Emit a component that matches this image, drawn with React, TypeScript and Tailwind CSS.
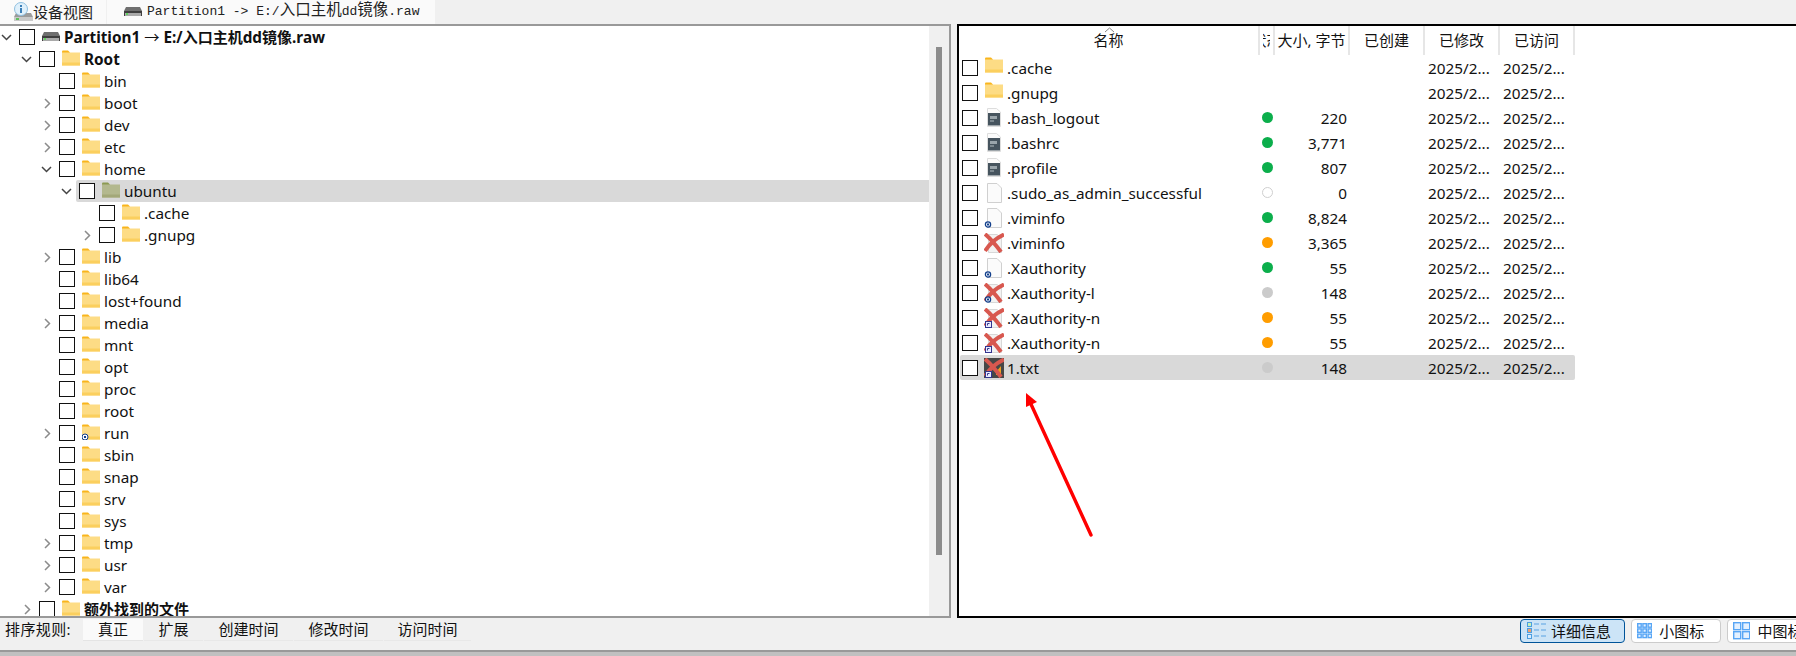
import React from "react";

const sans = "font-['Noto_Sans','Noto_Sans_CJK_SC',sans-serif]";

function Folder({ dim = false, dot = false }: { dim?: boolean; dot?: boolean }) {
  return (
    <svg width="18" height="16" viewBox="0 0 18 16" className="shrink-0">
      <path d="M0 1.5Q0 0.5 1 0.5H6L8 2.5V5H0Z" fill={dim ? "#8c9a52" : "#f9b51c"} />
      <rect x="0" y="2.5" width="18" height="13" fill={dim ? "#b3b88e" : "#fddc85"} />
      <rect x="0" y="12.5" width="18" height="3" fill={dim ? "#a3a878" : "#fbcf5e"} />
      {dot && (
        <g>
          <rect x="0" y="10" width="6" height="6" fill="#ffffff" stroke="#123f8c" strokeWidth="1" rx="3" />
          <rect x="2" y="12" width="2" height="2" fill="#123f8c" />
        </g>
      )}
    </svg>
  );
}

function Drive() {
  return (
    <svg width="18" height="10" viewBox="0 0 18 10" className="shrink-0">
      <path d="M2 0H16L18 4V9H0V4Z" fill="#6f6f6f" />
      <rect x="0" y="4" width="18" height="5" fill="#3f3f3f" />
      <rect x="1" y="6" width="16" height="3" fill="#a9a9a9" />
      <rect x="2" y="6" width="2" height="2" fill="#5fd35f" />
    </svg>
  );
}

function DeviceIcon() {
  return (
    <svg width="20" height="20" viewBox="0 0 20 20" className="shrink-0">
      <path d="M3 11H18L20 15V19H1V15Z" fill="#9b9b9b" />
      <rect x="1" y="15" width="19" height="4" fill="#c9c9c9" />
      <rect x="3" y="16" width="3" height="2" fill="#5fbf5f" />
      <circle cx="8" cy="7" r="6.5" fill="#dff0fb" stroke="#8fbfdf" />
      <rect x="7" y="6" width="2" height="5" fill="#3c7fb8" />
      <rect x="7" y="3" width="2" height="2" fill="#3c7fb8" />
    </svg>
  );
}

function Chevron({ open }: { open: boolean }) {
  return open ? (
    <svg width="11" height="7" viewBox="0 0 11 7" className="shrink-0">
      <path d="M1 1L5.5 5.5L10 1" fill="none" stroke="#444444" strokeWidth="1.5" />
    </svg>
  ) : (
    <svg width="7" height="11" viewBox="0 0 7 11" className="ml-[3px] shrink-0">
      <path d="M1 1L5.5 5.5L1 10" fill="none" stroke="#8c8c8c" strokeWidth="1.5" />
    </svg>
  );
}

function Check() {
  return <div className="h-4 w-4 shrink-0 border-[1.5px] border-[#111] bg-white" />;
}

const indent = ["w-[0px]", "w-[20px]", "w-[40px]", "w-[60px]", "w-[80px]"];

type TreeItem = {
  level: number;
  label: React.ReactNode;
  arrow?: "open" | "closed";
  bold?: boolean;
  kind?: "drive" | "dim" | "dot";
  active?: boolean;
};

const tree: TreeItem[] = [
  {
    level: 0,
    arrow: "open",
    bold: true,
    kind: "drive",
    label: (
      <>
        Partition1 <span className="font-normal">→</span> E:/<span className="text-[15px]">入口主机</span>dd
        <span className="text-[15px]">镜像</span>.raw
      </>
    ),
  },
  { level: 1, arrow: "open", bold: true, label: "Root" },
  { level: 2, label: "bin" },
  { level: 2, arrow: "closed", label: "boot" },
  { level: 2, arrow: "closed", label: "dev" },
  { level: 2, arrow: "closed", label: "etc" },
  { level: 2, arrow: "open", label: "home" },
  { level: 3, arrow: "open", label: "ubuntu", kind: "dim", active: true },
  { level: 4, label: ".cache" },
  { level: 4, arrow: "closed", label: ".gnupg" },
  { level: 2, arrow: "closed", label: "lib" },
  { level: 2, label: "lib64" },
  { level: 2, label: "lost+found" },
  { level: 2, arrow: "closed", label: "media" },
  { level: 2, label: "mnt" },
  { level: 2, label: "opt" },
  { level: 2, label: "proc" },
  { level: 2, label: "root" },
  { level: 2, arrow: "closed", label: "run", kind: "dot" },
  { level: 2, label: "sbin" },
  { level: 2, label: "snap" },
  { level: 2, label: "srv" },
  { level: 2, label: "sys" },
  { level: 2, arrow: "closed", label: "tmp" },
  { level: 2, arrow: "closed", label: "usr" },
  { level: 2, arrow: "closed", label: "var" },
  { level: 1, arrow: "closed", bold: true, label: <span className="text-[15px]">额外找到的文件</span> },
];

function TreeRow({ item }: { item: TreeItem }) {
  return (
    <div className="flex h-[22px] shrink-0 items-center">
      <div className={indent[item.level] + " shrink-0"} />
      <div className="flex w-4 shrink-0 items-center pl-px">
        {item.arrow && <Chevron open={item.arrow === "open"} />}
      </div>
      <div
        className={
          "flex h-[22px] flex-1 items-center rounded-l-[2px] pl-[3px] " + (item.active ? "bg-[#d9d9d9]" : "")
        }
      >
        <Check />
        {item.kind === "drive" ? (
          <div className="ml-[7px] flex w-[18px] shrink-0 items-center">
            <Drive />
          </div>
        ) : (
          <div className="ml-[7px] -mt-[2px] flex w-[18px] shrink-0 items-center">
            <Folder dim={item.kind === "dim"} dot={item.kind === "dot"} />
          </div>
        )}
        <span
          className={
            "ml-[4px] whitespace-nowrap text-[15.3px] leading-[22px] text-[#111] " + (item.bold ? "font-bold" : "")
          }
        >
          {item.label}
        </span>
      </div>
    </div>
  );
}

function Overlay({ kind }: { kind?: "dot" | "link" }) {
  if (kind === "dot")
    return (
      <g>
        <circle cx="4" cy="16.5" r="2.6" fill="#fff" stroke="#123f8c" strokeWidth="1.3" />
        <rect x="3" y="15.5" width="2" height="2" fill="#123f8c" />
      </g>
    );
  if (kind === "link")
    return (
      <g>
        <rect x="1.5" y="13.5" width="6" height="6" fill="#e8ecff" stroke="#34358f" strokeWidth="1" />
        <path d="M3.5 17.5V15.5H5.5" stroke="#34358f" strokeWidth="1" fill="none" />
      </g>
    );
  return null;
}

type Icon = "folder" | "script" | "page" | "x" | "dark";

function FileIcon({ icon, overlay }: { icon: Icon; overlay?: "dot" | "link" }) {
  if (icon === "folder")
    return (
      <div className="-mt-[5px] flex w-[18px] shrink-0 items-center">
        <Folder />
      </div>
    );
  return (
    <svg width="20" height="20" viewBox="0 0 20 20" className="-ml-px -mr-px shrink-0">
      {icon === "script" && (
        <g>
          <path d="M3.5 0.5H12.5L16.5 4V18.5H3.5Z" fill="#fbfbfb" stroke="#dddddd" />
          <rect x="4" y="5" width="12" height="12.5" fill="#46545e" />
          <rect x="6" y="8" width="7" height="3" fill="#9aa5ab" />
          <rect x="6" y="12" width="4" height="2" fill="#7c888f" />
        </g>
      )}
      {icon === "page" && <path d="M3.5 0.5H13L17.5 5V19.5H3.5Z" fill="#fbfbfb" stroke="#d0d0d0" />}
      {icon === "x" && <path d="M4.5 1.5H13L17.5 5V19.5H4.5Z" fill="#f2f2f2" stroke="#d8d8d8" />}
      {icon === "dark" && (
        <g>
          <rect x="0" y="0" width="20" height="20" fill="#474747" />
          <path d="M12 14L17 8V17H12Z" fill="#f0a020" />
        </g>
      )}
      {(icon === "x" || icon === "dark") && (
        <g fill="none" stroke="#d8584f" strokeWidth="4">
          <path d="M1 1Q9 8 17 19" />
          <path d="M20 1.5Q8 7 1 18" />
        </g>
      )}
      <Overlay kind={overlay} />
    </svg>
  );
}

type FileRow = {
  name: string;
  icon: Icon;
  overlay?: "dot" | "link";
  dot?: string;
  size?: string;
  active?: boolean;
};

const green = "bg-[#0bae4b]";
const orange = "bg-[#ff9d00]";
const gray = "bg-[#cbcbcb]";
const hollow = "bg-white border border-[#cfcfcf]";

const files: FileRow[] = [
  { name: ".cache", icon: "folder" },
  { name: ".gnupg", icon: "folder" },
  { name: ".bash_logout", icon: "script", dot: green, size: "220" },
  { name: ".bashrc", icon: "script", dot: green, size: "3,771" },
  { name: ".profile", icon: "script", dot: green, size: "807" },
  { name: ".sudo_as_admin_successful", icon: "page", dot: hollow, size: "0" },
  { name: ".viminfo", icon: "page", overlay: "dot", dot: green, size: "8,824" },
  { name: ".viminfo", icon: "x", dot: orange, size: "3,365" },
  { name: ".Xauthority", icon: "page", overlay: "dot", dot: green, size: "55" },
  { name: ".Xauthority-l", icon: "x", overlay: "dot", dot: gray, size: "148" },
  { name: ".Xauthority-n", icon: "x", overlay: "link", dot: orange, size: "55" },
  { name: ".Xauthority-n", icon: "x", overlay: "link", dot: orange, size: "55" },
  { name: "1.txt", icon: "dark", overlay: "link", dot: gray, size: "148", active: true },
];

function Row({ f }: { f: FileRow }) {
  return (
    <div className={"ml-px flex h-[25px] w-[615px] items-center rounded-[2px] " + (f.active ? "bg-[#d9d9d9]" : "")}>
      <div className="flex w-[300px] shrink-0 items-center pl-[2px]">
        <Check />
        <div className="ml-[7px] flex w-[18px] shrink-0 items-center">
          <FileIcon icon={f.icon} overlay={f.overlay} />
        </div>
        <span className="ml-[4px] whitespace-nowrap text-[15.3px] leading-[22px] text-[#111]">{f.name}</span>
      </div>
      <div className="flex w-[15px] shrink-0 pl-[2px]">{f.dot && <div className={"h-[11px] w-[11px] rounded-full " + f.dot} />}</div>
      <div className="w-[75px] shrink-0 pr-[3px] text-right text-[15.3px] leading-[22px] text-[#111]">{f.size}</div>
      <div className="w-[75px] shrink-0" />
      <div className="w-[75px] shrink-0 pl-[3px] text-[15.3px] leading-[22px] text-[#111]">2025/2...</div>
      <div className="w-[75px] shrink-0 pl-[3px] text-[15.3px] leading-[22px] text-[#111]">2025/2...</div>
    </div>
  );
}

function HeadCell({ w, children }: { w: string; children: React.ReactNode }) {
  return (
    <div
      className={
        w +
        " relative flex shrink-0 items-center justify-center overflow-hidden whitespace-nowrap border-r-2 border-[#e6e6e6] text-[15px] text-[#111]"
      }
    >
      {children}
    </div>
  );
}

function SortTab({ w, active, children }: { w: string; active?: boolean; children: React.ReactNode }) {
  return (
    <div
      className={
        w +
        " mr-px flex h-[22px] shrink-0 items-center justify-center text-[15px] text-[#111] " +
        (active ? "bg-[#fafafa] border-b border-[#e4e4e4]" : "border-b border-[#e8e8e8]")
      }
    >
      {children}
    </div>
  );
}

function GridIcon({ n, size, gap }: { n: number; size: number; gap: number }) {
  const rows = n === 3 ? 3 : 2;
  const cells: React.ReactNode[] = [];
  for (let y = 0; y < rows; y++)
    for (let x = 0; x < n; x++)
      cells.push(
        <rect
          key={x + "-" + y}
          x={0.7 + x * (size + gap)}
          y={0.7 + y * (size + gap)}
          width={size}
          height={size}
          fill="#e4f1ff"
          stroke="#58a6f5"
          strokeWidth="1.4"
        />
      );
  const s = n * size + (n - 1) * gap + 1.4;
  const h = rows * size + (rows - 1) * gap + 1.4;
  return (
    <svg width={s} height={h} viewBox={`0 0 ${s} ${h}`} className="shrink-0">
      {cells}
    </svg>
  );
}

function DetailsIcon() {
  return (
    <svg width="19" height="18" viewBox="0 0 19 18" className="shrink-0">
      <rect x="0.5" y="0.5" width="4" height="4" fill="#c6f0b8" stroke="#4c9fe0" />
      <rect x="0.5" y="6.5" width="4" height="4" fill="#f0a070" stroke="#4c9fe0" />
      <rect x="0.5" y="12.5" width="4" height="4" fill="#d8ebff" stroke="#4c9fe0" />
      <path d="M7 2H12M14 2H19M7 8H12M14 8H19M7 14H12M14 14H19" stroke="#7fb8ea" strokeWidth="1.4" />
    </svg>
  );
}

export default function App() {
  return (
    <div className={"relative flex h-[656px] w-[1796px] flex-col overflow-hidden bg-[#f0f0f0] " + sans}>
      <div className="flex h-6 shrink-0">
        <div className="flex w-[106px] items-center bg-[#fafafa] pl-[13px]">
          <DeviceIcon />
          <span className="text-[15px] text-[#222]">设备视图</span>
        </div>
        <div className="ml-px flex w-[328px] items-center bg-[#fafafa] pl-[17px]">
          <div className="w-[18px] shrink-0">
            <Drive />
          </div>
          <span className="ml-[5px] whitespace-nowrap font-['Liberation_Mono','Noto_Sans_CJK_SC',monospace] text-[13px] text-[#222]">
            Partition1 -&gt; E:/<span className="text-[15.5px]">入口主机</span>dd<span className="text-[15.5px]">镜像</span>.raw
          </span>
        </div>
      </div>

      <div className="flex h-[594px] shrink-0">
        <div className="flex h-full w-[951px] shrink-0 border-y-2 border-r-2 border-[#999999]">
          <div className="flex w-[929px] shrink-0 flex-col overflow-hidden bg-white">
            {tree.map((item, i) => (
              <TreeRow key={i} item={item} />
            ))}
          </div>
          <div className="w-5 shrink-0 bg-[#f0f0f0]">
            <div className="mx-auto mt-[21px] h-[508px] w-1.5 bg-[#8c8c8c]" />
          </div>
        </div>

        <div className="ml-1.5 flex-1 border-y-2 border-l-2 border-black bg-white">
          <div className="flex h-[29px]">
            <HeadCell w="w-[301px]">
              <svg width="11" height="6" viewBox="0 0 11 6" className="absolute left-[145px] top-[1px]">
                <path d="M1 5L5.5 1L10 5" fill="none" stroke="#888888" />
              </svg>
              <span>名称</span>
            </HeadCell>
            <HeadCell w="w-[15px]">
              <span className="flex w-[7px] justify-center overflow-hidden">状态</span>
            </HeadCell>
            <HeadCell w="w-[75px]">大小, 字节</HeadCell>
            <HeadCell w="w-[75px]">已创建</HeadCell>
            <HeadCell w="w-[75px]">已修改</HeadCell>
            <HeadCell w="w-[75px]">已访问</HeadCell>
          </div>
          {files.map((f, i) => (
            <Row key={i} f={f} />
          ))}
        </div>
      </div>

      <div className="flex h-8 shrink-0 items-start overflow-hidden">
        <div className="flex h-[23px] w-[83px] shrink-0 items-center pl-[5px] text-[15px] tracking-[0.4px] text-[#111]">排序规则:</div>
        <div className="mt-px flex shrink-0">
          <SortTab w="w-[60px]" active>
            真正
          </SortTab>
          <SortTab w="w-[59px]">扩展</SortTab>
          <SortTab w="w-[89px]">创建时间</SortTab>
          <SortTab w="w-[89px]">修改时间</SortTab>
          <SortTab w="w-[87px]">访问时间</SortTab>
        </div>
        <div className="ml-[1048px] mt-px flex shrink-0 gap-1.5">
          <div className="flex h-6 w-[105px] shrink-0 items-center rounded-[4px] border border-[#005499] bg-[#cce4f7] pl-[6px] text-[15px] text-[#111]">
            <DetailsIcon />
            <span className="ml-[5px]">详细信息</span>
          </div>
          <div className="flex h-6 w-[90px] shrink-0 items-center rounded-[4px] border border-[#cccccc] bg-white pl-[5px] text-[15px] text-[#111]">
            <GridIcon n={3} size={3.5} gap={1.7} />
            <span className="ml-[7px]">小图标</span>
          </div>
          <div className="flex h-6 w-[100px] shrink-0 items-center rounded-[4px] border border-[#cccccc] bg-white pl-[5px] text-[15px] text-[#111]">
            <GridIcon n={2} size={7} gap={2} />
            <span className="ml-[7px]">中图标</span>
          </div>
        </div>
      </div>
      <div className="h-1.5 shrink-0 border-t-2 border-[#999999] bg-[#c0c0c0]" />

      <svg width="80" height="150" viewBox="0 0 80 150" className="absolute left-[1020px] top-[390px]">
        <path d="M71 145L10 12" stroke="#ff0000" strokeWidth="3.4" strokeLinecap="round" fill="none" />
        <path d="M6 3L17 12L6 17Z" fill="#ff0000" />
      </svg>
    </div>
  );
}
